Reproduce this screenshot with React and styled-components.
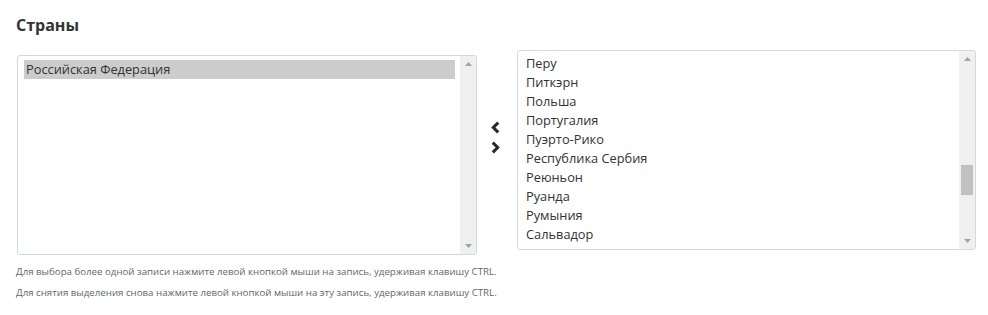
import styled, { createGlobalStyle } from "styled-components"

const GlobalStyle = createGlobalStyle`
    body {
        margin: 0;
        background: #fff;
        font-family: "Open Sans", "Noto Sans", sans-serif;
        color: #333;
    }
`

const leftItems = ["Российская Федерация"]
const rightItems = [
    "Перу",
    "Питкэрн",
    "Польша",
    "Португалия",
    "Пуэрто-Рико",
    "Республика Сербия",
    "Реюньон",
    "Руанда",
    "Румыния",
    "Сальвадор",
]

const ListBox = ({ items, selected, thumb, offset }) => (
    <Box>
        <Options offset={offset}>
            {items.map((item) => (
                <Option key={item} selected={selected === item}>{item}</Option>
            ))}
        </Options>
        <Scrollbar>
            <Arrow viewBox="0 0 7 4"><path d="M0 4 L3.5 0 L7 4 Z" /></Arrow>
            <Track>{thumb && <Thumb />}</Track>
            <Arrow viewBox="0 0 7 4"><path d="M0 0 L3.5 4 L7 0 Z" /></Arrow>
        </Scrollbar>
    </Box>
)

export default function App() {
    return (
        <>
            <GlobalStyle />
            <Page>
                <Title>Страны</Title>
                <Picker>
                    <LeftCol>
                        <ListBox items={leftItems} selected="Российская Федерация" offset={4} />
                    </LeftCol>
                    <Buttons>
                        <Chevron viewBox="0 0 10 12">
                            <path d="M7.5 1.5 L3 6 L7.5 10.5" />
                        </Chevron>
                        <Chevron viewBox="0 0 10 12">
                            <path d="M2.5 1.5 L7 6 L2.5 10.5" />
                        </Chevron>
                    </Buttons>
                    <ListBox items={rightItems} thumb offset={3} />
                </Picker>
                <Hint>Для выбора более одной записи нажмите левой кнопкой мыши на запись, удерживая клавишу CTRL.</Hint>
                <Hint>Для снятия выделения снова нажмите левой кнопкой мыши на эту запись, удерживая клавишу CTRL.</Hint>
            </Page>
        </>
    )
}

const Page = styled.div`
    padding: 14px 12px 0 16px;
`

const Title = styled.h2`
    margin: 0 0 14px;
    font-size: 16px;
    line-height: 22px;
    font-weight: 700;
    color: #333;
`

const Picker = styled.div`
    display: grid;
    grid-template-columns: 460px 40px 459px;
    align-items: start;
    margin-left: 1px;
`

const LeftCol = styled.div`
    padding-top: 5px;
`

const Box = styled.div`
    display: flex;
    height: 200px;
    box-sizing: border-box;
    border: 1px solid #d3d8e2;
    border-radius: 3px;
    background: #fff;
    overflow: hidden;
`

const Options = styled.div`
    flex: 1;
    padding: ${(p) => p.offset}px 5px 0 6px;
    overflow: hidden;
`

const Option = styled.div`
    height: 19px;
    line-height: 19px;
    font-size: 12.8px;
    padding-left: 2px;
    color: #333;
    background: ${(p) => (p.selected ? "#cccccc" : "transparent")};
    white-space: nowrap;
`

const Scrollbar = styled.div`
    width: 16px;
    background: #f0f0f0;
    display: flex;
    flex-direction: column;
    align-items: center;
    padding: 6px 0;
`

const Arrow = styled.svg`
    width: 7px;
    height: 4px;
    fill: #a3a3a3;
    flex: none;
`

const Track = styled.div`
    flex: 1;
    align-self: stretch;
    padding: 104px 2px 0;
`

const Thumb = styled.div`
    height: 30px;
    background: #c1c1c1;
`

const Buttons = styled.div`
    display: flex;
    flex-direction: column;
    align-items: center;
    gap: 7px;
    padding: 71px 4px 0 0;
`

const Chevron = styled.svg`
    width: 11px;
    height: 13px;
    fill: none;
    stroke: #1f2a35;
    stroke-width: 2.8;
`

const Hint = styled.p`
    margin: 11px 0 0;
    font-size: 9.7px;
    line-height: 11px;
    color: #666;
    & + & {
        margin-top: 10px;
    }
`
